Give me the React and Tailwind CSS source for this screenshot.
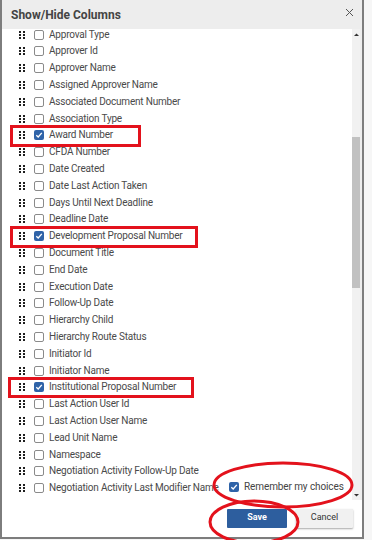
import React from "react";

const COLUMNS = [
  "Approval Type",
  "Approver Id",
  "Approver Name",
  "Assigned Approver Name",
  "Associated Document Number",
  "Association Type",
  "Award Number",
  "CFDA Number",
  "Date Created",
  "Date Last Action Taken",
  "Days Until Next Deadline",
  "Deadline Date",
  "Development Proposal Number",
  "Document Title",
  "End Date",
  "Execution Date",
  "Follow-Up Date",
  "Hierarchy Child",
  "Hierarchy Route Status",
  "Initiator Id",
  "Initiator Name",
  "Institutional Proposal Number",
  "Last Action User Id",
  "Last Action User Name",
  "Lead Unit Name",
  "Namespace",
  "Negotiation Activity Follow-Up Date",
  "Negotiation Activity Last Modifier Name",
  "Negotiation Activity Last Update Date",
];

const CHECKED = ["Award Number", "Development Proposal Number", "Institutional Proposal Number"];

function Grip() {
  return (
    <svg width="6" height="8" viewBox="0 0 6 8" className="shrink-0">
      {[0, 3, 6].map((y) =>
        [0, 4].map((x) => <rect key={`${x}-${y}`} x={x} y={y} width="2" height="2" fill="#1f1f1f" />)
      )}
    </svg>
  );
}

function Box({ checked }) {
  if (checked) {
    return (
      <span className="w-[10px] h-[10px] shrink-0 rounded-[2px] bg-[#2f63a8] flex items-center justify-center">
        <svg width="8" height="8" viewBox="0 0 8 8">
          <path d="M1.3 4.2 L3.2 6 L6.8 1.8" stroke="#fff" strokeWidth="1.3" fill="none" />
        </svg>
      </span>
    );
  }
  return <span className="block w-[10px] h-[10px] shrink-0 rounded-[2px] border border-[#8a8a8a] bg-white" />;
}

function Row({ label }) {
  return (
    <div className="h-[16.8px] flex items-center pl-[17px]">
      <Grip />
      <span className="ml-[9px]">
        <Box checked={CHECKED.includes(label)} />
      </span>
      <span className="ml-[5px] whitespace-nowrap text-[10px] tracking-[-0.2px] text-[#4a4a4a] leading-none">{label}</span>
    </div>
  );
}

export default function App() {
  return (
    <div className="w-[372px] h-[540px] bg-[#f6f6f6] relative overflow-hidden" style={{ fontFamily: "Roboto, 'Liberation Sans', sans-serif" }}>
      <div className="w-[364px] h-[539px] bg-[#ededed] border-l-2 border-r-2 border-b-2 border-[#7d7d7d] flex flex-col">
        {/* header */}
        <div className="h-[29px] shrink-0 flex items-center justify-between pl-[9px] pr-[8px]">
          <span className="text-[12px] font-bold text-[#444]">Show/Hide Columns</span>
          <svg width="9" height="9" viewBox="0 0 9 9" className="mb-[5px]">
            <path d="M1 1 L8 8 M8 1 L1 8" stroke="#555" strokeWidth="1" />
          </svg>
        </div>

        {/* list + scrollbar */}
        <div className="flex h-[471px] shrink-0 pr-[2px]">
          <div className="flex-1 bg-white overflow-hidden relative">
            <div className="-mt-[2.8px]">
              {COLUMNS.map((c) => (
                <Row key={c} label={c} />
              ))}
            </div>
            <div className="absolute left-[224px] top-[450px] h-[15px] pl-[3px] pr-[4px] bg-white flex items-center gap-[5px]">
              <Box checked />
              <span className="text-[10px] tracking-[-0.1px] text-[#444] whitespace-nowrap leading-none">Remember my choices</span>
            </div>
          </div>
          <div className="w-[8px] bg-[#f1f1f1] flex flex-col items-center">
            <svg width="5" height="4" viewBox="0 0 5 4" className="mt-[4px]">
              <path d="M0 3 L2.5 0.5 L5 3 Z" fill="#333" />
            </svg>
            <div className="w-[8px] h-[151px] bg-[#c1c1c1] mt-[100px]" />
            <div className="flex-1" />
            <svg width="5" height="4" viewBox="0 0 5 4" className="mb-[3px]">
              <path d="M0 1 L2.5 3.5 L5 1 Z" fill="#333" />
            </svg>
          </div>
        </div>

        {/* footer */}
        <div className="flex-1 bg-white flex items-center justify-end gap-[9px] pr-[9px] pb-[1px]">
          <button className="w-[60px] h-[19px] bg-[#2d5e9e] text-white text-[9px] font-bold rounded-[1px]">Save</button>
          <button className="w-[57px] h-[19px] bg-[#f1f1f1] text-[#333] text-[9px] rounded-[1px] shadow-[0_1px_2px_rgba(0,0,0,0.35)]">Cancel</button>
        </div>
      </div>

      {/* annotations */}
      <div className="absolute left-[10px] top-[125px] w-[131px] h-[22px] border-[3px] border-[#e3121c]" />
      <div className="absolute left-[10px] top-[226px] w-[188px] h-[22px] border-[3px] border-[#e3121c]" />
      <div className="absolute left-[8px] top-[377px] w-[186px] h-[21px] border-[3px] border-[#e3121c]" />
      <svg className="absolute left-0 top-0" width="372" height="540" viewBox="0 0 372 540">
        <ellipse cx="283" cy="485" rx="69" ry="22" fill="none" stroke="#e3121c" strokeWidth="3" />
        <ellipse cx="254" cy="522" rx="44" ry="21" fill="none" stroke="#e3121c" strokeWidth="3" />
      </svg>
    </div>
  );
}
